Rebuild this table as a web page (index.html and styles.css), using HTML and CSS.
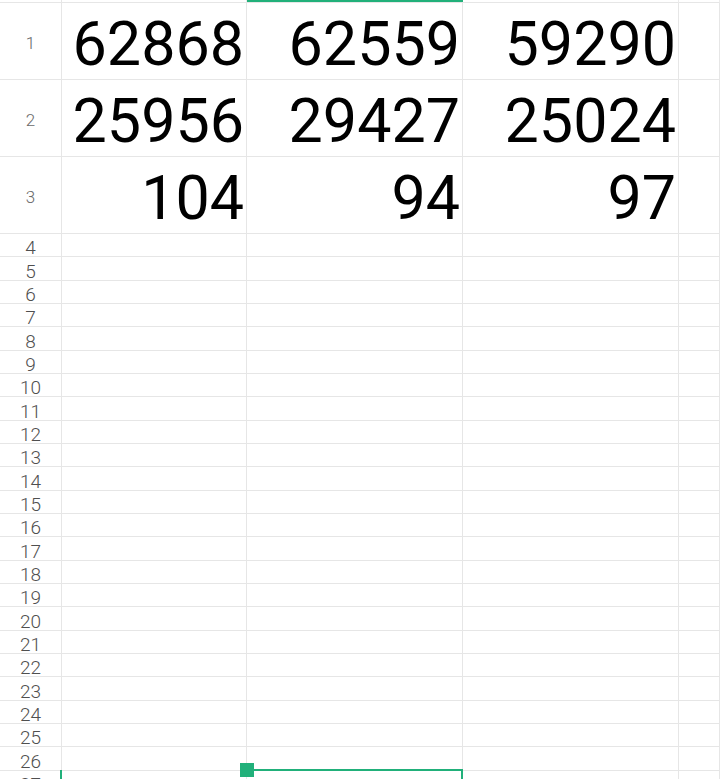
FILE: index.html
```html
<!DOCTYPE html>
<html>
<head>
<meta charset="utf-8">
<link rel="stylesheet" href="styles.css">
</head>
<body>
<div class="sheet">
  <div class="grid">
    <div class="cell corner"></div><div class="cell top"></div><div class="cell top"></div><div class="cell top"></div><div class="cell top"></div>

    <div class="cell rh big">1</div><div class="cell num">62868</div><div class="cell num">62559</div><div class="cell num">59290</div><div class="cell"></div>
    <div class="cell rh big">2</div><div class="cell num">25956</div><div class="cell num">29427</div><div class="cell num">25024</div><div class="cell"></div>
    <div class="cell rh big">3</div><div class="cell num">104</div><div class="cell num">94</div><div class="cell num">97</div><div class="cell"></div>

    <div class="cell rh">4</div><div class="cell"></div><div class="cell"></div><div class="cell"></div><div class="cell"></div>
    <div class="cell rh">5</div><div class="cell"></div><div class="cell"></div><div class="cell"></div><div class="cell"></div>
    <div class="cell rh">6</div><div class="cell"></div><div class="cell"></div><div class="cell"></div><div class="cell"></div>
    <div class="cell rh">7</div><div class="cell"></div><div class="cell"></div><div class="cell"></div><div class="cell"></div>
    <div class="cell rh">8</div><div class="cell"></div><div class="cell"></div><div class="cell"></div><div class="cell"></div>
    <div class="cell rh">9</div><div class="cell"></div><div class="cell"></div><div class="cell"></div><div class="cell"></div>
    <div class="cell rh">10</div><div class="cell"></div><div class="cell"></div><div class="cell"></div><div class="cell"></div>
    <div class="cell rh">11</div><div class="cell"></div><div class="cell"></div><div class="cell"></div><div class="cell"></div>
    <div class="cell rh">12</div><div class="cell"></div><div class="cell"></div><div class="cell"></div><div class="cell"></div>
    <div class="cell rh">13</div><div class="cell"></div><div class="cell"></div><div class="cell"></div><div class="cell"></div>
    <div class="cell rh">14</div><div class="cell"></div><div class="cell"></div><div class="cell"></div><div class="cell"></div>
    <div class="cell rh">15</div><div class="cell"></div><div class="cell"></div><div class="cell"></div><div class="cell"></div>
    <div class="cell rh">16</div><div class="cell"></div><div class="cell"></div><div class="cell"></div><div class="cell"></div>
    <div class="cell rh">17</div><div class="cell"></div><div class="cell"></div><div class="cell"></div><div class="cell"></div>
    <div class="cell rh">18</div><div class="cell"></div><div class="cell"></div><div class="cell"></div><div class="cell"></div>
    <div class="cell rh">19</div><div class="cell"></div><div class="cell"></div><div class="cell"></div><div class="cell"></div>
    <div class="cell rh">20</div><div class="cell"></div><div class="cell"></div><div class="cell"></div><div class="cell"></div>
    <div class="cell rh">21</div><div class="cell"></div><div class="cell"></div><div class="cell"></div><div class="cell"></div>
    <div class="cell rh">22</div><div class="cell"></div><div class="cell"></div><div class="cell"></div><div class="cell"></div>
    <div class="cell rh">23</div><div class="cell"></div><div class="cell"></div><div class="cell"></div><div class="cell"></div>
    <div class="cell rh">24</div><div class="cell"></div><div class="cell"></div><div class="cell"></div><div class="cell"></div>
    <div class="cell rh">25</div><div class="cell"></div><div class="cell"></div><div class="cell"></div><div class="cell"></div>
    <div class="cell rh">26</div><div class="cell"></div><div class="cell"></div><div class="cell"></div><div class="cell"></div>
    <div class="cell rh">27</div><div class="cell"></div><div class="cell"></div><div class="cell"></div><div class="cell"></div>
  </div>

  <div class="sel-top"></div>
  <div class="sel-left"></div>
  <div class="sel-line"></div>
  <div class="sel-right"></div>
  <div class="sel-handle"></div>
</div>
</body>
</html>
```

FILE: styles.css
```css
html, body {
  margin: 0;
  padding: 0;
  background: #ffffff;
  overflow: hidden;
}

.sheet {
  position: relative;
  width: 720px;
  height: 779px;
  overflow: hidden;
  font-family: Roboto, "Liberation Sans", sans-serif;
}

.grid {
  display: grid;
  grid-template-columns: 62px 185px 216px 216px 41px;
  grid-template-rows: 3px 77px 77px 77px repeat(24, 23.33px);
}

.cell {
  box-sizing: border-box;
  border-right: 1px solid #e6e6e6;
  border-bottom: 1px solid #e6e6e6;
  overflow: hidden;
}

.top {
  border-right: 1px solid #ececec;
}

.rh {
  display: flex;
  justify-content: center;
  align-items: flex-end;
  overflow: visible;
  font-size: 19px;
  font-weight: 300;
  line-height: 17px;
  color: #4f4f4f;
}

.rh.big {
  align-items: center;
  font-size: 17px;
  line-height: 20px;
  color: #6a6a6a;
  padding-top: 3px;
}

.num {
  display: flex;
  justify-content: flex-end;
  align-items: center;
  padding-right: 2px;
  padding-top: 6px;
  font-size: 61px;
  line-height: 1;
  color: #000000;
}

.sel-top,
.sel-left,
.sel-line,
.sel-right,
.sel-handle {
  position: absolute;
  background: #21b07a;
}

.sel-top {
  left: 247px;
  top: 0;
  width: 216px;
  height: 2px;
}

.sel-left {
  left: 60px;
  top: 770px;
  width: 2px;
  height: 9px;
}

.sel-line {
  left: 254px;
  top: 769px;
  width: 209px;
  height: 2px;
}

.sel-right {
  left: 461px;
  top: 769px;
  width: 2px;
  height: 10px;
}

.sel-handle {
  left: 240px;
  top: 763px;
  width: 14px;
  height: 14px;
}
```
